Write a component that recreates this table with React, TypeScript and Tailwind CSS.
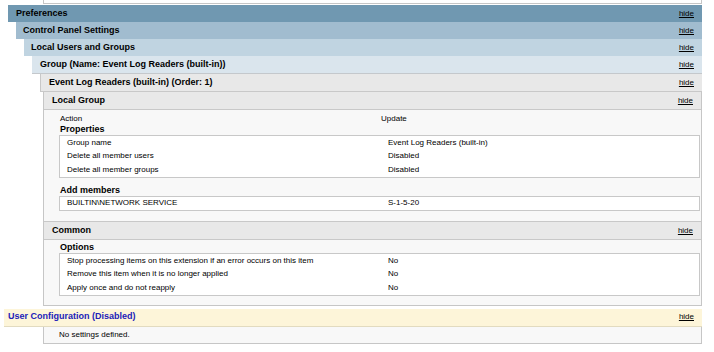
import type { ReactNode } from 'react'

const font = "font-['Liberation_Sans',Arial,sans-serif]"

function Hide() {
  return <span className="text-[8px] font-normal text-black underline">hide</span>
}

function Bar({ className, children }: { className: string; children: ReactNode }) {
  return (
    <div className={`flex items-center justify-between pr-[8px] text-[9px] font-bold text-black ${className}`}>
      <span>{children}</span>
      <Hide />
    </div>
  )
}

function Row({ label, value }: { label: string; value: string }) {
  return (
    <div className="flex h-[13.5px] items-center pl-[7px]">
      <span className="w-[321px] shrink-0">{label}</span>
      <span>{value}</span>
    </div>
  )
}

function Table({ rows }: { rows: [string, string][] }) {
  return (
    <div className="border border-[#c8c8c8] bg-white">
      {rows.map(([l, v]) => (
        <Row key={l} label={l} value={v} />
      ))}
    </div>
  )
}

function Label({ children }: { children: ReactNode }) {
  return <div className="flex h-[10px] items-center pl-px text-[9px] font-bold">{children}</div>
}

export default function App() {
  return (
    <div className={`h-[352px] w-[714px] overflow-hidden bg-white text-[8px] text-black ${font}`}>
      {/* tail of the section above */}
      <div className="ml-[43px] h-[4px] w-[659px] border-x border-b border-[#c6c6c6] bg-white" />

      <div className="ml-[8px] mt-px w-[694px]">
        <Bar className="h-[17px] bg-[#7098b1] pl-[8px]">Preferences</Bar>
        <div className="ml-[8px]">
          <Bar className="h-[17px] bg-[#a1bccf] pl-[7px]">Control Panel Settings</Bar>
          <div className="ml-[8px]">
            <Bar className="h-[17px] bg-[#c0d4e1] pl-[7px]">Local Users and Groups</Bar>
            <div className="ml-[8px]">
              <Bar className="h-[18px] border-b border-[#c4c8cc] bg-[#dae5ed] pl-[8px]">
                Group (Name: Event Log Readers (built-in))
              </Bar>
              <div className="ml-[8px]">
                <Bar className="h-[18px] border-b border-l border-[#c8c8c8] bg-[#e8e8e8] pl-[8px]">
                  Event Log Readers (built-in) (Order: 1)
                </Bar>
                <div className="ml-[3px] border-x border-b border-[#c6c6c6] bg-[#f8f8f8]">
                  <Bar className="h-[18px] border-b border-[#c8c8c8] bg-[#e8e8e8] pl-[8px]">Local Group</Bar>
                  <div className="pb-[10px] pl-[15px] pr-px pt-[2px]">
                    <div className="flex h-[13px] items-center pl-px">
                      <span className="w-[321px] shrink-0">Action</span>
                      <span>Update</span>
                    </div>
                    <Label>Properties</Label>
                    <Table
                      rows={[
                        ['Group name', 'Event Log Readers (built-in)'],
                        ['Delete all member users', 'Disabled'],
                        ['Delete all member groups', 'Disabled'],
                      ]}
                    />
                    <div className="mt-[8px]">
                      <Label>Add members</Label>
                    </div>
                    <Table rows={[[String.raw`BUILTIN\NETWORK SERVICE`, 'S-1-5-20']]} />
                  </div>

                  <Bar className="h-[19px] border-y border-[#c8c8c8] bg-[#e8e8e8] pl-[8px]">Common</Bar>
                  <div className="pb-[9px] pl-[15px] pr-px pt-[3px]">
                    <Label>Options</Label>
                    <Table
                      rows={[
                        ['Stop processing items on this extension if an error occurs on this item', 'No'],
                        ['Remove this item when it is no longer applied', 'No'],
                        ['Apply once and do not reapply', 'No'],
                      ]}
                    />
                  </div>
                </div>
              </div>
            </div>
          </div>
        </div>
      </div>

      <div className="ml-[4px] mt-[3px] w-[698px]">
        <div className="flex h-[18px] items-center justify-between border-b border-[#e2dbc0] bg-[#fdf5d9] pl-[4px] pr-[8px]">
          <span className="text-[9px] font-bold text-[#2121b8]">User Configuration (Disabled)</span>
          <Hide />
        </div>
      </div>
      <div className="ml-[43px] flex h-[17px] w-[659px] items-center border-x border-b border-[#c6c6c6] bg-[#f8f8f8] pl-[15px]">
        No settings defined.
      </div>
    </div>
  )
}
